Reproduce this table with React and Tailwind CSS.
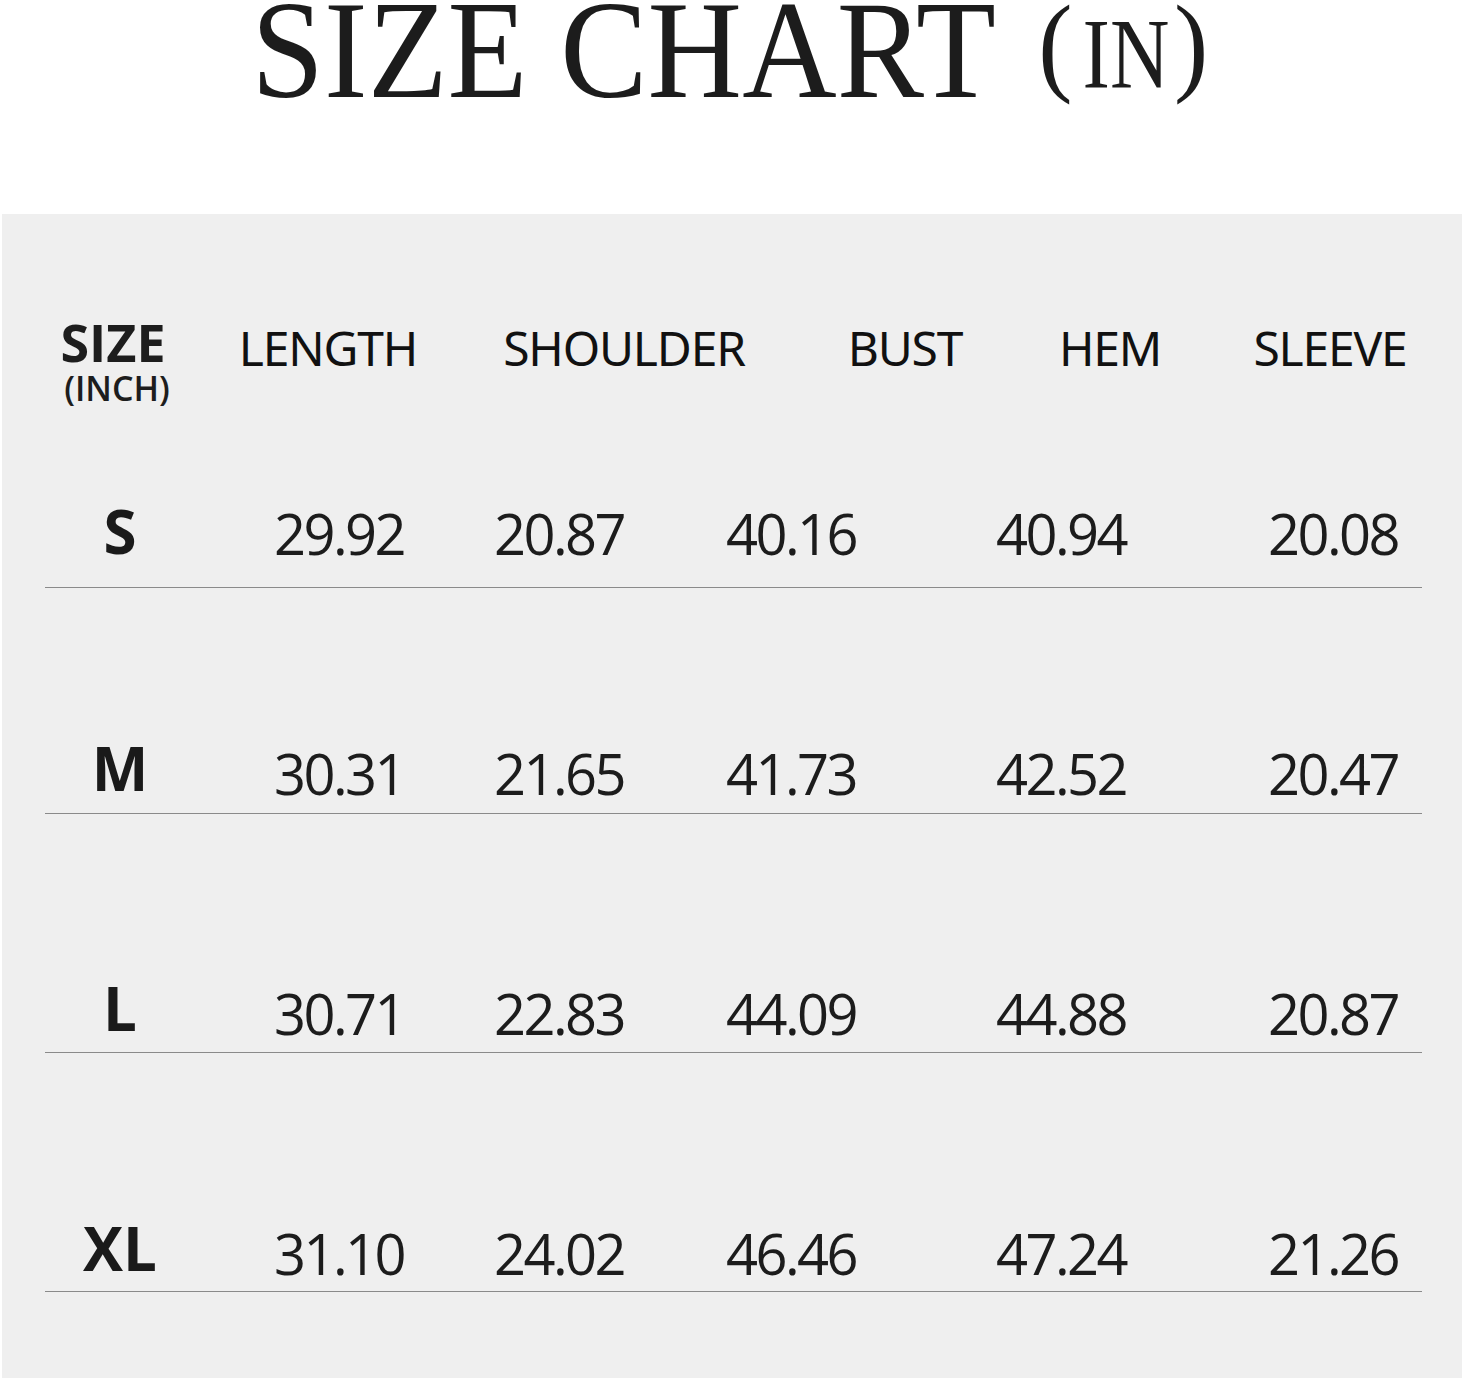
import React from 'react';

const rows = [
  { size: 'S', vals: ['29.92', '20.87', '40.16', '40.94', '20.08'], h: 'h-[148px]', pb: 'pb-[26px]', lab: '' },
  { size: 'M', vals: ['30.31', '21.65', '41.73', '42.52', '20.47'], h: 'h-[226px]', pb: 'pb-[12px]', lab: 'mb-[3px]' },
  { size: 'L', vals: ['30.71', '22.83', '44.09', '44.88', '20.87'], h: 'h-[239px]', pb: 'pb-[11px]', lab: 'mb-[3px]' },
  { size: 'XL', vals: ['31.10', '24.02', '46.46', '47.24', '21.26'], h: 'h-[239px]', pb: 'pb-[10px]', lab: 'mb-[3px]' },
];

const headers = ['LENGTH', 'SHOULDER', 'BUST', 'HEM', 'SLEEVE'];

const App = () => {
  return (
    <div className="w-[1464px] h-[1381px] bg-white overflow-hidden">
      {/* title */}
      <div className="h-[214px] flex justify-center items-start" style={{ fontFamily: '"Liberation Serif", serif' }}>
        <div className="flex items-start -ml-[4px] scale-x-[0.935] origin-center text-[#1c1c1c] whitespace-nowrap">
          <span className="text-[140px] leading-[99px]">SIZE CHART</span>
          <span className="text-[110px] leading-[88px] ml-[45px]">(</span>
          <span className="text-[100px] leading-[108px] ml-[11px] scale-x-[0.88] origin-left inline-block">IN</span>
          <span className="text-[110px] leading-[88px] -ml-[8px]">)</span>
        </div>
      </div>

      {/* table panel */}
      <div className="ml-[2px] w-[1460px] h-[1164px] bg-[#efefef]">
        <div className="h-[226px] pt-[102px] grid grid-cols-[222px_208px_384px_178px_232px_208px] items-start text-center text-[#111]">
          <div className="flex flex-col items-center" style={{ fontFamily: '"Open Sans", sans-serif' }}>
            <span className="text-[52px] font-bold leading-none text-[#1d1d1d]">SIZE</span>
            <span className="text-[34px] font-semibold leading-none mt-[3px] ml-[8px] text-[#1d1d1d]">(INCH)</span>
          </div>
          {headers.map(h => (
            <div key={h} className="mt-[8px] text-[48px] leading-none tracking-tight" style={{ fontFamily: '"Noto Sans", sans-serif' }}>
              {h}
            </div>
          ))}
        </div>

        {rows.map(r => (
          <div key={r.size} className={`${r.h} flex flex-col justify-end`}>
            <div className={`grid grid-cols-[236px_202px_238px_226px_314px_230px] items-end text-center ${r.pb}`} style={{ fontFamily: '"Open Sans", sans-serif' }}>
              <div className={`text-[60px] font-bold leading-none text-[#1a1a1a] ${r.lab}`}>{r.size}</div>
              {r.vals.map((v, i) => (
                <div key={i} className="text-[56px] leading-none tracking-[-0.045em] text-[#1c1c1c]">{v}</div>
              ))}
            </div>
            <div className="ml-[43px] w-[1377px] h-px bg-[#8a8a8a]"></div>
          </div>
        ))}
      </div>
    </div>
  );
};

export default App;
